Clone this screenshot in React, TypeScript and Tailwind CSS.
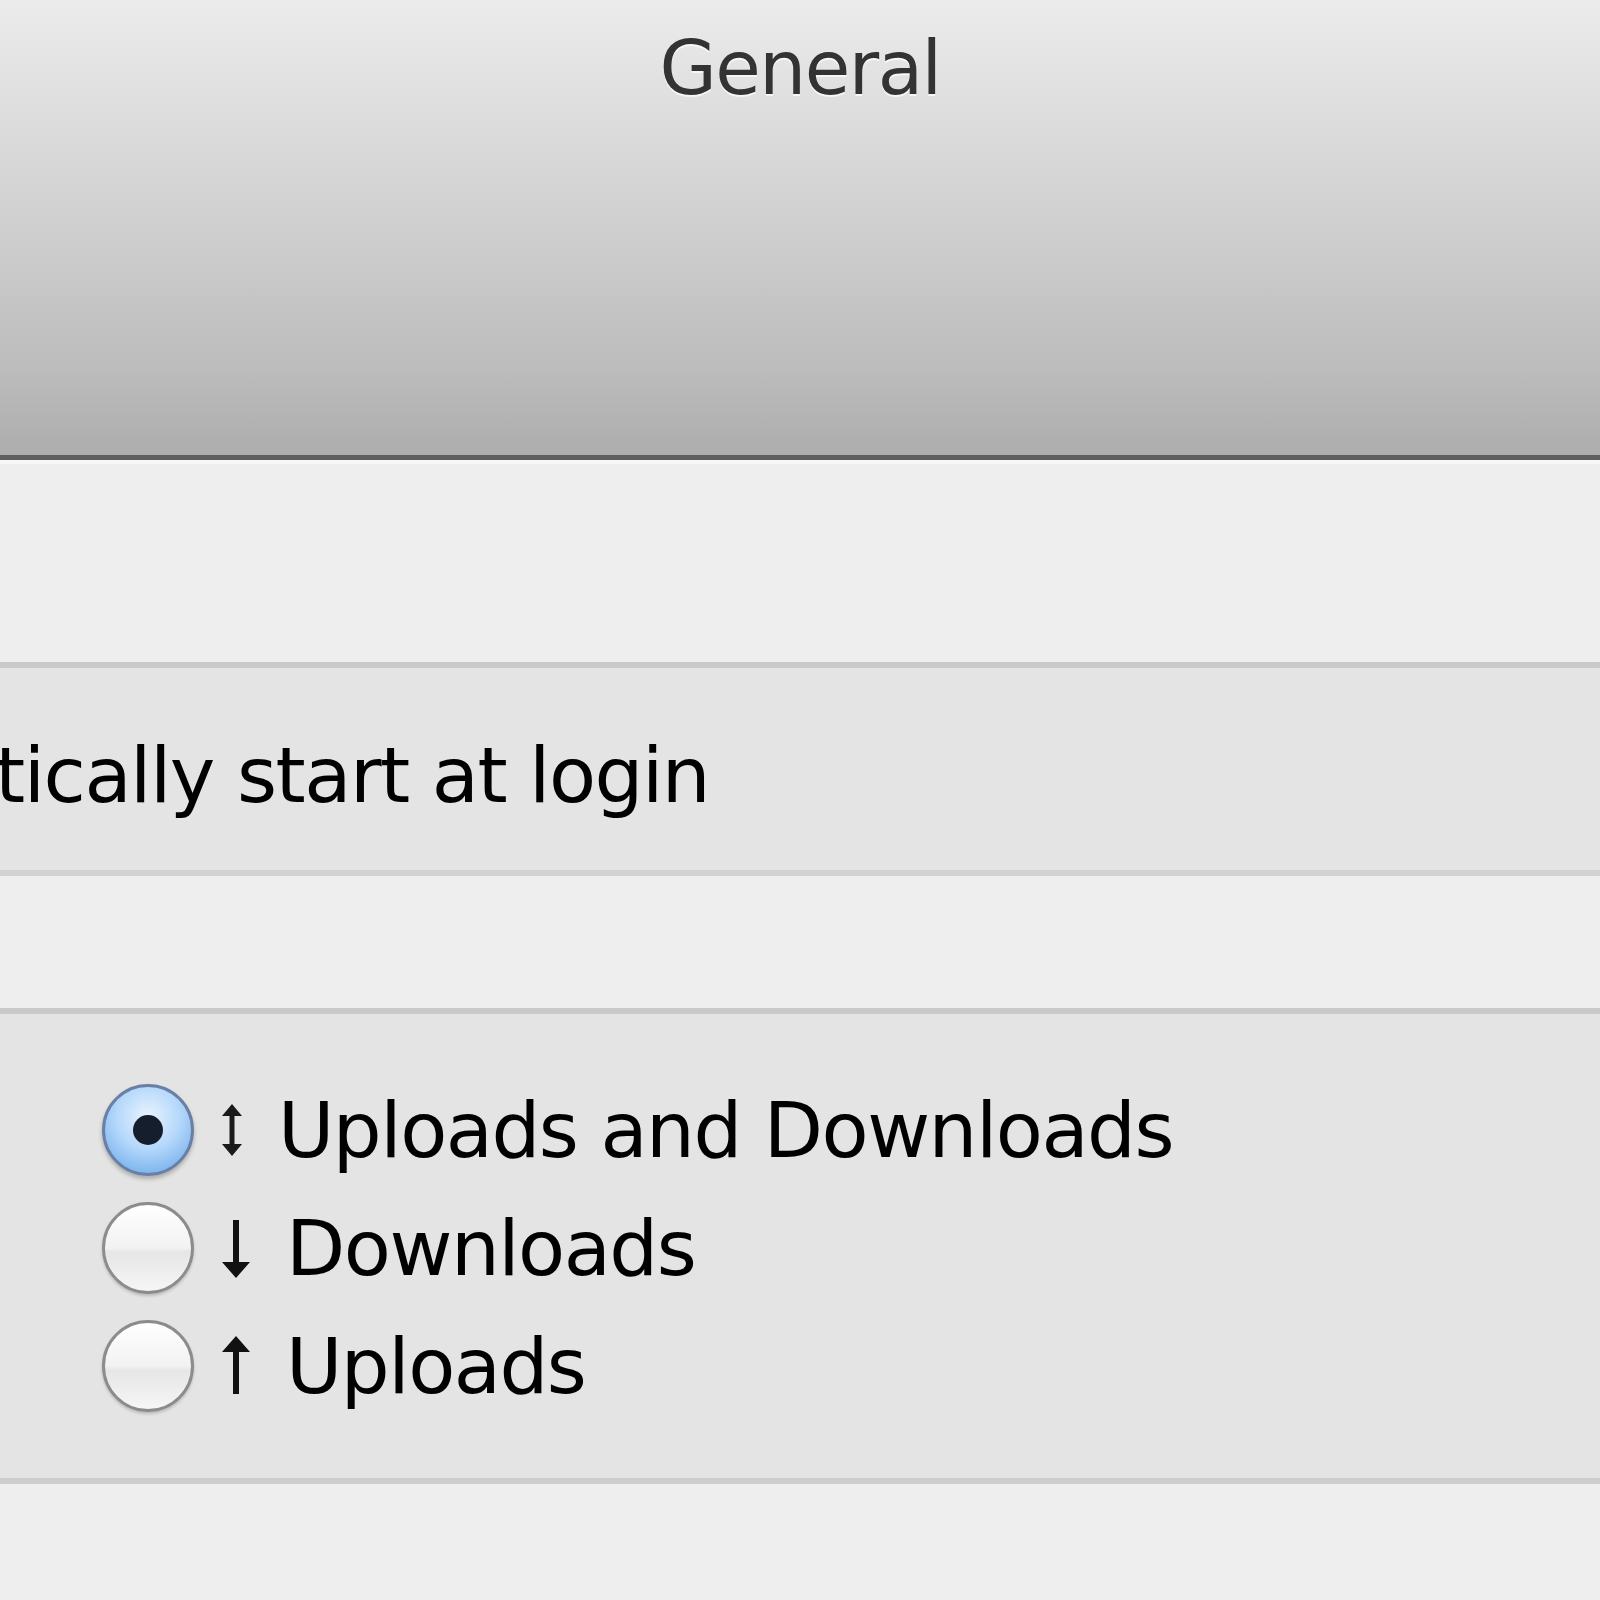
import React from 'react';

const font = { fontFamily: '"DejaVu Sans", "Verdana", sans-serif' };

const Radio = ({ checked }: { checked: boolean }) => (
  <div
    className={`w-[92px] h-[92px] rounded-full flex items-center justify-center shrink-0 ${
      checked
        ? 'border-[3px] border-[#6a7fa6] bg-[radial-gradient(circle_at_50%_35%,#eaf4ff_0%,#b5d8fb_45%,#7fb6ee_80%,#9ccaf5_100%)] shadow-[0_3px_4px_rgba(0,0,0,0.25)]'
        : 'border-[3px] border-[#8c8c8c] bg-[linear-gradient(#ffffff,#f2f2f2_50%,#e6e6e6_55%,#f6f6f6)] shadow-[0_2px_3px_rgba(0,0,0,0.18)]'
    }`}
  >
    {checked && <div className="w-[30px] h-[30px] rounded-full bg-[#141e2c]" />}
  </div>
);

const ArrowUpDown = () => (
  <svg width="36" height="64" viewBox="0 0 36 64" className="shrink-0">
    <path d="M18 6 L8 18 H15.5 V46 H8 L18 58 L28 46 H20.5 V18 H28 Z" fill="#1a1a1a" />
  </svg>
);

const ArrowDown = () => (
  <svg width="40" height="64" viewBox="0 0 40 64" className="shrink-0">
    <path d="M17 4 H23 V46 H34 L20 62 L6 46 H17 Z" fill="#111" />
  </svg>
);

const ArrowUp = () => (
  <svg width="40" height="64" viewBox="0 0 40 64" className="shrink-0">
    <path d="M20 2 L34 18 H23 V60 H17 V18 H6 Z" fill="#111" />
  </svg>
);

export default function App() {
  return (
    <div className="w-[1600px] h-[1600px] overflow-hidden bg-[#eeeeee] flex flex-col" style={font}>
      {/* Toolbar */}
      <div className="h-[455px] shrink-0 bg-[linear-gradient(#ececec_0%,#e0e0e0_20%,#cfcfcf_50%,#bdbdbd_80%,#adadad_100%)] flex justify-center">
        <div className="pt-[31px] text-[74px] leading-none tracking-[-1.5px] text-[#333] [text-shadow:0_2px_0_rgba(255,255,255,0.7)]">
          General
        </div>
      </div>
      <div className="h-[5px] shrink-0 bg-[#5e5e5e]" />
      <div className="h-[4px] shrink-0 bg-[#f7f7f7]" />

      <div className="h-[198px] shrink-0" />

      {/* Login box */}
      <div className="h-[214px] shrink-0 bg-[#e4e4e4] border-y-[6px] border-t-[#c9c9c9] border-b-[#d2d2d2] flex items-center overflow-hidden">
        <div className="text-[77px] leading-none tracking-[-1.5px] text-black whitespace-nowrap ml-[-297px] pt-[12px]">
          Automatically start at login
        </div>
      </div>

      <div className="h-[132px] shrink-0" />

      {/* Transfers box */}
      <div className="h-[476px] shrink-0 bg-[#e4e4e4] border-y-[6px] border-t-[#c9c9c9] border-b-[#cdcdcd] pl-[102px] pt-[70px] flex flex-col gap-[26px]">
        <div className="flex items-center h-[92px]">
          <Radio checked />
          <div className="ml-[20px]"><ArrowUpDown /></div>
          <span className="ml-[28px] text-[77px] leading-none tracking-[-1.5px] text-black whitespace-nowrap">Uploads and Downloads</span>
        </div>
        <div className="flex items-center h-[92px]">
          <Radio checked={false} />
          <div className="ml-[22px]"><ArrowDown /></div>
          <span className="ml-[30px] text-[77px] leading-none tracking-[-1.5px] text-black whitespace-nowrap">Downloads</span>
        </div>
        <div className="flex items-center h-[92px]">
          <Radio checked={false} />
          <div className="ml-[22px]"><ArrowUp /></div>
          <span className="ml-[30px] text-[77px] leading-none tracking-[-1.5px] text-black whitespace-nowrap">Uploads</span>
        </div>
      </div>
    </div>
  );
}
